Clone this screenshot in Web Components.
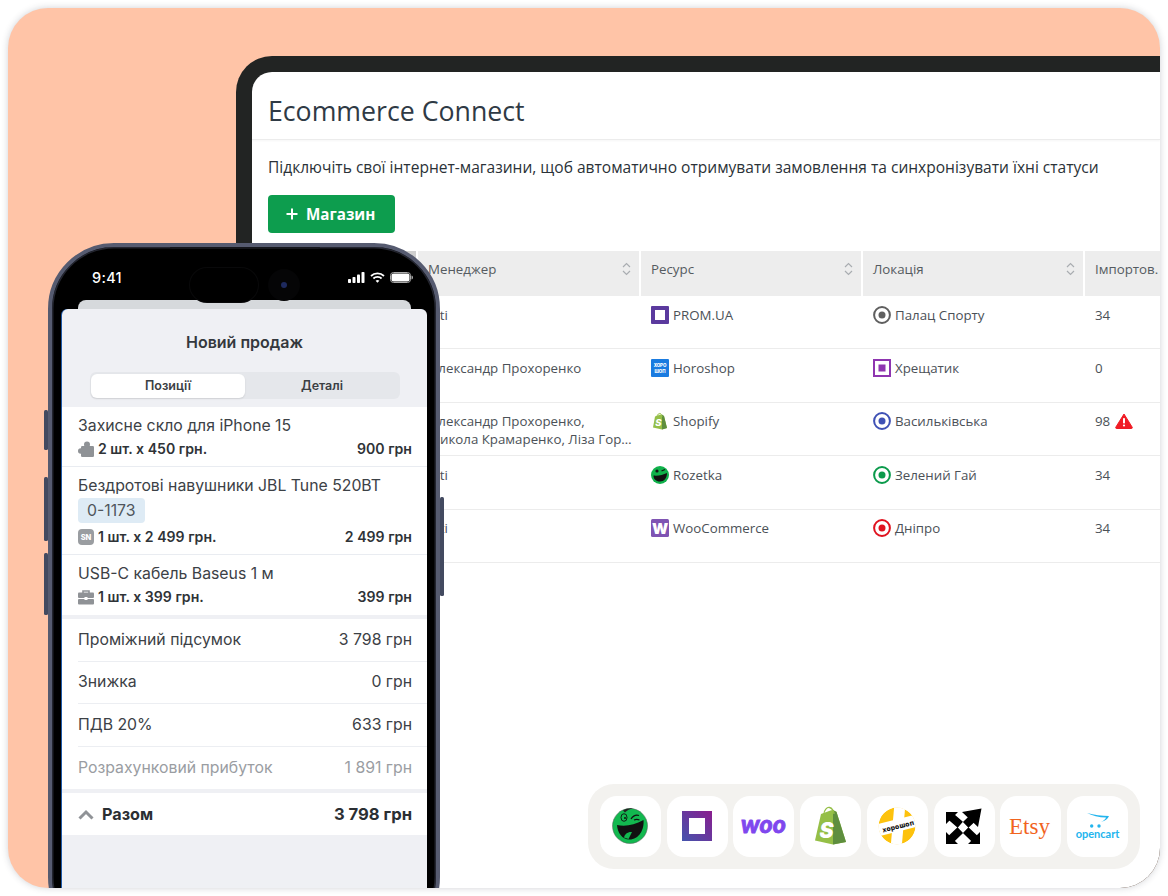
<!doctype html>
<html lang="uk"><head><meta charset="utf-8"><title>Ecommerce Connect</title>
<style>html,body{margin:0;padding:0;background:#fff}</style></head>
<body>
<promo-card>
  <admin-tablet></admin-tablet>
  <sale-phone slot="over"></sale-phone>
  <logo-bar slot="over"></logo-bar>
</promo-card>
<script>
const I={
 prom:'<svg width="18" height="18" viewBox="0 0 18 18"><rect width="18" height="18" rx="1" fill="#5b3a9e"/><rect x="4" y="4" width="10" height="10" fill="#fff"/></svg>',
 horo:'<svg width="18" height="18" viewBox="0 0 18 18"><rect width="18" height="18" rx="1" fill="#1a7be0"/><text x="9" y="8" font-family="Inter,sans-serif" font-size="4.400" font-weight="800" fill="#fff" text-anchor="middle">ХОРО</text><text x="9" y="13.500" font-family="Inter,sans-serif" font-size="4.400" font-weight="800" fill="#fff" text-anchor="middle">ШОП</text></svg>',
 shop:'<svg width="18" height="18" viewBox="0 0 18 18"><path d="M2 15.500 4 4.500 8 3l1-.6L13 4l3 12-5 1.500z" fill="#95bf47"/><path d="M11 2.600 13 4l3 12-5 1.500z" fill="#5e8e3e"/><path d="M6 5c0-3 3-4.500 4-3s1 2.500 1 3" fill="none" stroke="#95bf47"/><text x="7.500" y="14" font-family="Inter,sans-serif" font-size="9.500" font-weight="800" font-style="italic" fill="#fff" text-anchor="middle">S</text></svg>',
 roz:'<svg width="18" height="18" viewBox="0 0 18 18"><circle cx="9" cy="9" r="9" fill="#10b14b"/><path d="M2.500 9.500C7 10 12 9 16 7c0 5-3 8.500-7 8.500S2.500 13 2.500 9.500z" fill="#111"/><circle cx="6" cy="5" r="1.600" fill="#111"/><path d="M10.500 5 14 3.500" stroke="#111" stroke-width="1.300"/></svg>',
 woo:'<svg width="18" height="18" viewBox="0 0 18 18"><rect width="18" height="18" rx="1.500" fill="#7f54b3"/><text x="9" y="14.500" font-family="Inter,sans-serif" font-size="15" font-weight="900" fill="#fff" text-anchor="middle">W</text></svg>',
 ring:c=>`<svg width="18" height="18" viewBox="0 0 18 18"><circle cx="9" cy="9" r="7.900" fill="#fff" stroke="${c}" stroke-width="2"/><circle cx="9" cy="9" r="3.500" fill="${c}"/></svg>`,
 sq:'<svg width="18" height="18" viewBox="0 0 18 18"><rect x="1" y="1" width="16" height="16" fill="#fff" stroke="#8e35b0" stroke-width="2"/><rect x="5.500" y="5.500" width="7" height="7" fill="#8e35b0"/></svg>',
 warn:'<svg width="18" height="16" viewBox="0 0 18 16"><path d="M9 1 17.200 14.200a.8.8 0 0 1-.7 1.300h-15a.8.8 0 0 1-.7-1.300z" fill="#f01c25" stroke="#f01c25" stroke-linejoin="round"/><rect x="8" y="5" width="2" height="5.500" rx=".8" fill="#fff"/><circle cx="9" cy="12.500" r="1.100" fill="#fff"/></svg>',
 sort:'<svg width="9" height="14" viewBox="0 0 9 14" fill="none" stroke="#a9adb1" stroke-width="1.200"><path d="M1 5l3.500-3.500L8 5M1 9l3.500 3.500L8 9"/></svg>',
 puzzle:'<svg width="16" height="16" viewBox="0 0 16 16" fill="#8f9296"><rect x="3" y="5" width="13" height="11" rx="1.200"/><circle cx="9" cy="3.500" r="3"/><circle cx="2.700" cy="10" r="2.700"/></svg>',
 sn:'<svg width="16" height="16" viewBox="0 0 16 16"><rect width="16" height="16" rx="4" fill="#9a9da1"/><text x="8" y="11" font-family="Inter,sans-serif" font-size="7.500" font-weight="800" fill="#fff" text-anchor="middle">SN</text></svg>',
 case:'<svg width="16" height="16" viewBox="0 0 16 16"><path d="M5 4V2h6v2" fill="none" stroke="#8f9296" stroke-width="1.600"/><rect y="3.500" width="16" height="5.500" rx="1" fill="#8f9296"/><rect y="10" width="16" height="5.500" rx="1" fill="#8f9296"/><rect x="6.500" y="8" width="3" height="3" fill="#fff"/></svg>'
};
function def(name,css,html){
  customElements.define(name,class extends HTMLElement{
    constructor(){super();this.attachShadow({mode:'open'})}
    connectedCallback(){const a=n=>this.getAttribute(n)||'';
      this.shadowRoot.innerHTML=`<style>${css}</style>`+(typeof html==='function'?html(a):html)}
  })
}
def('promo-card',`:host{display:block;width:1152px;height:880px;margin:8px;position:relative;border-radius:40px;overflow:hidden;background:#ffc4a7;box-shadow:0 0 7px rgba(40,50,70,.22)}
 .flow{display:block;padding:48px 0 0 228px;height:832px;box-sizing:content-box}`,
 `<div class="flow"><slot></slot></div><slot name="over"></slot>`);

def('admin-tablet',`:host{display:block;height:100%;background:#222423;border-radius:36px 0 0 0;padding:16px 0 0 16px;box-sizing:border-box;font-family:"Open Sans",sans-serif;color:#333}
 .screen{background:#fff;height:100%;border-radius:20px 0 0 0;overflow:hidden}
 header{height:68px;box-sizing:border-box;padding:19px 16px 0;font-size:26.700px;line-height:40px;color:#2f3a45;border-bottom:1px solid #ececec;box-shadow:0 1px 2px rgba(0,0,0,.04)}
 .body{padding:17px 16px 18px}
 p{margin:0 0 18px;font-size:15.550px;line-height:20px;color:#2b3238;white-space:nowrap}
 button{all:unset;display:inline-flex;align-items:center;gap:8px;box-sizing:border-box;width:127px;height:38px;padding-left:18px;border-radius:4px;background:#0d9d4e;color:#fff;font:700 15.200px "Open Sans",sans-serif}
 svg{display:block}`,
 `<div class="screen"><header>Ecommerce Connect</header>
 <div class="body"><p>Підключіть свої інтернет-магазини, щоб автоматично отримувати замовлення та синхронізувати їхні статуси</p>
 <button><svg width="12" height="12" viewBox="0 0 12 12"><path d="M6 .5v11M.5 6h11" stroke="#fff" stroke-width="2"/></svg>Магазин</button></div>
 <shop-table></shop-table></div>`);

def('shop-table',`:host{display:block}
 .head{display:grid;grid-template-columns:164px 221px 220px 220px 1fr;gap:0 2px;height:45px}
 .h{background:#ededed;display:flex;align-items:center;justify-content:space-between;padding:0 8px 9px 10px;font-size:13.300px;color:#555b60;box-sizing:border-box}
 .h.first{background:#cfcfcf}
 .h.last{padding-right:0}
 .h span{white-space:nowrap}
 svg{display:block}`,
 `<div class="head"><div class="h first"></div><div class="h"><span>Менеджер</span>${I.sort}</div><div class="h"><span>Ресурс</span>${I.sort}</div><div class="h"><span>Локація</span>${I.sort}</div><div class="h last"><span>Імпортов.</span></div></div>
 <shop-row manager="Aiti" res="prom" resource="PROM.UA" loc="grey" location="Палац Спорту" n="34"></shop-row>
 <shop-row manager="Олександр Прохоренко" res="horo" resource="Horoshop" loc="sq" location="Хрещатик" n="0"></shop-row>
 <shop-row manager="Олександр Прохоренко," manager2="Микола Крамаренко, Ліза Гор…" res="shop" resource="Shopify" loc="blue" location="Васильківська" n="98" warn="1"></shop-row>
 <shop-row manager="Aiti" res="roz" resource="Rozetka" loc="green" location="Зелений Гай" n="34"></shop-row>
 <shop-row manager="Aiti" res="woo" resource="WooCommerce" loc="red" location="Дніпро" n="34"></shop-row>`);

const LOC={grey:I.ring('#5f5f5f'),blue:I.ring('#3f51b5'),green:I.ring('#0b9a4b'),red:I.ring('#e0121f'),sq:I.sq};
def('shop-row',`:host{display:grid;grid-template-columns:164px 221px 220px 220px 1fr;gap:0 2px;height:53.400px;border-bottom:1px solid #ececec;box-sizing:border-box;font-size:13.300px;line-height:18px;color:#4b5157}
 .c{padding:9.600px 10px 0;white-space:nowrap;overflow:hidden}
 .i{display:flex;gap:4px;align-items:flex-start}
 svg{display:block;flex:none}
 .w{display:flex;gap:5px;align-items:center}`,
 a=>`<div class="c"></div><div class="c">${a('manager')}${a('manager2')?'<br>'+a('manager2'):''}</div>
 <div class="c"><div class="i">${I[a('res')]}<span>${a('resource')}</span></div></div>
 <div class="c"><div class="i">${LOC[a('loc')]}<span>${a('location')}</span></div></div>
 <div class="c"><div class="w"><span>${a('n')}</span>${a('warn')?I.warn:''}</div></div>`);

def('sale-phone',`:host{display:block;position:absolute;left:40px;top:235px;width:392px;height:700px;font-family:Inter,sans-serif}
 .frame{position:relative;box-sizing:border-box;height:100%;border-radius:66px;background:#000;border:4px solid #565b70;padding:0 9px 0 10px;box-shadow:inset 0 0 0 1.500px #23252f;display:flex;flex-direction:column}
 .btn{position:absolute;background:#434a60;width:4px;border-radius:1.500px}
 .status{height:53px;flex:none;position:relative;color:#fff}
 .time{position:absolute;left:30px;top:20px;font:500 14.500px/22px Inter,sans-serif;letter-spacing:.3px}
 .icons{position:absolute;right:14px;top:25px;display:flex;gap:5px;align-items:center}
 .island{position:absolute;left:128px;top:21px;width:68px;height:34px;border-radius:17px;background:#000;box-shadow:0 0 0 1px #09090a;z-index:2}
 .cam{position:absolute;left:206px;top:22px;width:32px;height:32px;border-radius:50%;background:#050506;z-index:2;display:grid;place-items:center}
 .cam i{width:6px;height:6px;border-radius:50%;background:#1e2a5e}
 .lip{position:absolute;left:118px;top:0;width:150px;height:2px;background:#15161b;border-radius:0 0 4px 4px}
 .back{flex:none;height:9px;margin:0 16px;background:#d6d9dc;border-radius:8px 8px 0 0}
 .sheet{flex:1;background:#eff0f4;border-radius:6px 6px 0 0;box-shadow:-1px 0 0 #1f5aa8;min-height:0}
 h1{margin:0;padding-top:22px;text-align:center;font:600 16px/22px Inter,sans-serif;color:#34383d;height:22px}
 .seg{margin:19px 27px 0 28px;height:27px;background:#e5e7eb;border-radius:6px;display:grid;grid-template-columns:154px 1fr;padding:1px;box-sizing:border-box;font:600 12.500px/24px Inter,sans-serif;color:#3b3f44;text-align:center}
 .seg b{font-weight:600;background:#fff;border-radius:6px;box-shadow:0 1px 2px rgba(0,0,0,.1);margin:1px 0}
 .seg span{line-height:26px}
 .group{background:#fff}
 .items{margin-top:8px}
 .sum{margin-top:4px}
 .tot{margin-top:4px}`,
 `<div class="frame">
   <i class="btn" style="left:-8px;top:163px;height:40px"></i>
   <i class="btn" style="left:-8px;top:230px;height:64px"></i>
   <i class="btn" style="left:-8px;top:306px;height:62px"></i>
   <i class="btn" style="right:-8px;top:250px;height:99px"></i>
   <div class="lip"></div>
   <div class="status"><span class="time">9:41</span><div class="island"></div><div class="cam"><i></i></div>
     <div class="icons">
      <svg width="17" height="11" viewBox="0 0 17 11" fill="#fff"><rect y="7" width="3" height="4" rx=".8"/><rect x="4.500" y="5" width="3" height="6" rx=".8"/><rect x="9" y="2.500" width="3" height="8.500" rx=".8"/><rect x="13.500" width="3" height="11" rx=".8"/></svg>
      <svg width="15" height="11" viewBox="0 0 15 11" fill="none" stroke="#fff" stroke-width="1.800"><path d="M1 4a9.500 9.500 0 0 1 13 0M3.400 6.500a6 6 0 0 1 8.200 0"/><path d="M7.500 10.800 5.600 8.800a2.800 2.800 0 0 1 3.800 0z" fill="#fff" stroke="none"/></svg>
      <svg width="23" height="11" viewBox="0 0 23 11"><rect x=".5" y=".5" width="20" height="10" rx="3" fill="none" stroke="#aaa"/><rect x="1.500" y="1.500" width="18" height="8" rx="2" fill="#fff"/><path d="M21.500 3.500c1 .3 1.500 1 1.500 2s-.5 1.700-1.500 2z" fill="#aaa"/></svg>
     </div></div>
   <div class="back"></div>
   <div class="sheet">
     <h1>Новий продаж</h1>
     <div class="seg"><b>Позиції</b><span>Деталі</span></div>
     <div class="group items">
       <cart-line name="Захисне скло для iPhone 15" icon="puzzle" qty="2 шт. x 450 грн." sum="900 грн"></cart-line>
       <cart-line name="Бездротові навушники JBL Tune 520BT" chip="0-1173" icon="sn" qty="1 шт. x 2 499 грн." sum="2 499 грн"></cart-line>
       <cart-line name="USB-C кабель Baseus 1 м" icon="case" qty="1 шт. x 399 грн." sum="399 грн" last="1"></cart-line>
     </div>
     <div class="group sum">
       <sum-row label="Проміжний підсумок" value="3 798 грн"></sum-row>
       <sum-row label="Знижка" value="0 грн"></sum-row>
       <sum-row label="ПДВ 20%" value="633 грн"></sum-row>
       <sum-row label="Розрахунковий прибуток" value="1 891 грн" muted="1"></sum-row>
     </div>
     <div class="group tot"><total-row label="Разом" value="3 798 грн"></total-row></div>
   </div>
 </div>`);

def('cart-line',`:host{display:block;padding:9px 15px 7px 16px;border-bottom:1px solid #e9ecf1;color:#3c4146}
 :host([last]){border-bottom:0;padding-bottom:8px}
 .n{font:400 15.800px/20px Inter,sans-serif;white-space:nowrap}
 .chip{margin:2px 0 4px;display:block;width:max-content;padding:0 9px;height:25px;line-height:25px;border-radius:4px;background:#deebf5;font-size:15.800px;color:#50565c}
 .m{margin-top:3px;display:flex;align-items:center;justify-content:space-between;font:600 14.100px/20px Inter,sans-serif;color:#2f3337}
 .chip + .m{margin-top:0}
 .l{display:flex;align-items:center;gap:4px}
 svg{display:block}`,
 a=>`<div class="n">${a('name')}</div>${a('chip')?`<div class="chip">${a('chip')}</div>`:''}<div class="m"><span class="l">${I[a('icon')]}${a('qty')}</span><span>${a('sum')}</span></div>`);

def('sum-row',`:host{display:flex;justify-content:space-between;align-items:center;height:42.500px;margin-left:16px;padding-right:15px;box-sizing:border-box;border-bottom:1px solid #eceef2;font:400 15.800px/20px Inter,sans-serif;color:#3c4146}
 :host([muted]){color:#9a9da2;border-bottom:0}`,
 a=>`<span>${a('label')}</span><span>${a('value')}</span>`);

def('total-row',`:host{display:flex;justify-content:space-between;align-items:center;height:42px;padding:0 15px 0 16px;font:700 16.200px/20px Inter,sans-serif;color:#2b2f33}
 .l{display:flex;gap:8px;align-items:center}
 .v{font-size:16.600px}
 svg{display:block}`,
 a=>`<span class="l"><svg width="16" height="11" viewBox="0 0 16 11" fill="none" stroke="#909397" stroke-width="3"><path d="M1.500 9.500 8 3l6.500 6.500"/></svg>${a('label')}</span><span class="v">${a('value')}</span>`);

const L={
 rozetka:`<svg width="61" height="61" viewBox="0 0 61 61"><circle cx="30" cy="30" r="17.500" fill="#12b84f" stroke="#555" stroke-width=".5"/><path d="M23 14.500c3-2 7-2.500 10-2-3 .5-6 1.500-8 4z" fill="#222"/><ellipse cx="24" cy="21.500" rx="3" ry="3.800" fill="#12b84f" stroke="#111" stroke-width=".9"/><circle cx="25" cy="22" r="1" fill="#111"/><path d="M31 23c2-3 5-4.500 8-3.500M34 24c2-.8 3.500-.8 5.500 0" fill="none" stroke="#111" stroke-width="1.300"/><path d="M17 29c8 1.500 17 .5 26.500-5 1 9.500-4.500 19.500-14 19.500-7.500 0-12-7-12.500-14.500z" fill="#111"/><path d="M24 41.500c.5-3.500 4-6 8-5.500l-3.500 7z" fill="#12b84f"/></svg>`,
 prom:`<svg width="61" height="61" viewBox="0 0 61 61"><defs><linearGradient id="g" x1="0" y1="1" x2="1" y2="0"><stop offset="0" stop-color="#4454ad"/><stop offset="1" stop-color="#8a1d8e"/></linearGradient></defs><rect x="15" y="15" width="30" height="30" fill="url(#g)"/><rect x="22" y="22" width="16" height="16" fill="#fff"/></svg>`,
 woo:`<svg width="61" height="61" viewBox="0 0 61 61"><text x="30.500" y="37" text-anchor="middle" font-family="Lato,sans-serif" font-size="25" font-weight="900" font-style="italic" letter-spacing=".2" stroke="#7f47ee" stroke-width=".8" fill="#7f47ee">woo</text></svg>`,
 shopify:`<svg width="61" height="61" viewBox="0 0 61 61"><path d="M15 44.500 21 18l9.500-3.500 2-.5 4 1.800L46 46 33 48.500z" fill="#95bf47"/><path d="M33 14l3.500 2 9.500 30-13 2.500z" fill="#5e8e3e"/><path d="M24 18c0-4 3-7 5.500-6.500S34 15 34 18" fill="none" stroke="#95bf47" stroke-width="1.300"/><text x="26.500" y="42" text-anchor="middle" font-family="Inter,sans-serif" font-weight="900" font-style="italic" font-size="21" fill="#fff">S</text></svg>`,
 horoshop:`<svg width="61" height="61" viewBox="0 0 61 61"><defs><clipPath id="hc"><circle cx="30" cy="30" r="18.500"/></clipPath></defs><g clip-path="url(#hc)"><circle cx="30" cy="30" r="18.500" fill="#fdc20d"/><g transform="rotate(-14 30 30)"><rect x="5" y="23.500" width="52" height="12" fill="#fff"/></g><g transform="rotate(5 30 30)"><rect x="25.500" y="5" width="11" height="52" fill="#fff"/></g></g><text x="31" y="33" text-anchor="middle" transform="rotate(-14 30 30)" font-family="Inter,sans-serif" font-size="6.800" letter-spacing=".2" font-weight="800" fill="#111">хорошоп</text></svg>`,
 arrow:`<svg width="61" height="61" viewBox="0 0 61 61" fill="#000" stroke="none"><path d="M12 16H24L12 28zM12 48H24L12 36zM46 48H34L46 36zM47.500 12.500 28 16 44 31z"/><path d="M15 19 26.300 28.800M15 45 26.300 34.200M43 45 31.700 34.200M41 20 31.700 28.800" stroke="#000" stroke-width="8" fill="none"/></svg>`,
 etsy:`<svg width="61" height="61" viewBox="0 0 61 61"><text x="29.500" y="38" text-anchor="middle" font-family="Liberation Serif,serif" font-size="23" fill="#f1641e">Etsy</text></svg>`,
 opencart:`<svg width="61" height="61" viewBox="0 0 61 61"><path d="M20 17c7 2 15 3 22 3-1 3-4 5-8 6 3-1.500 4.500-3 5-4.500-7 0-14-2-19-4.500z" fill="#23b5ee"/><circle cx="24.700" cy="30" r="1.700" fill="#23b5ee"/><circle cx="32" cy="30" r="1.700" fill="#23b5ee"/><text x="30.500" y="42" text-anchor="middle" font-family="Lato,sans-serif" font-size="11" font-weight="700" fill="#23b5ee">opencart</text></svg>`
};
def('logo-bar',`:host{display:grid;position:absolute;left:580px;top:776px;width:552px;height:85px;box-sizing:border-box;padding:12px;grid-template-columns:repeat(8,61px);justify-content:space-between;background:#f3f2ef;border-radius:26px}`,
 Object.keys(L).map(k=>`<logo-tile kind="${k}"></logo-tile>`).join(''));
def('logo-tile',`:host{display:block;width:61px;height:61px;background:#fff;border-radius:17px;overflow:hidden}svg{display:block}`,a=>L[a('kind')]);
</script>
</body></html>
